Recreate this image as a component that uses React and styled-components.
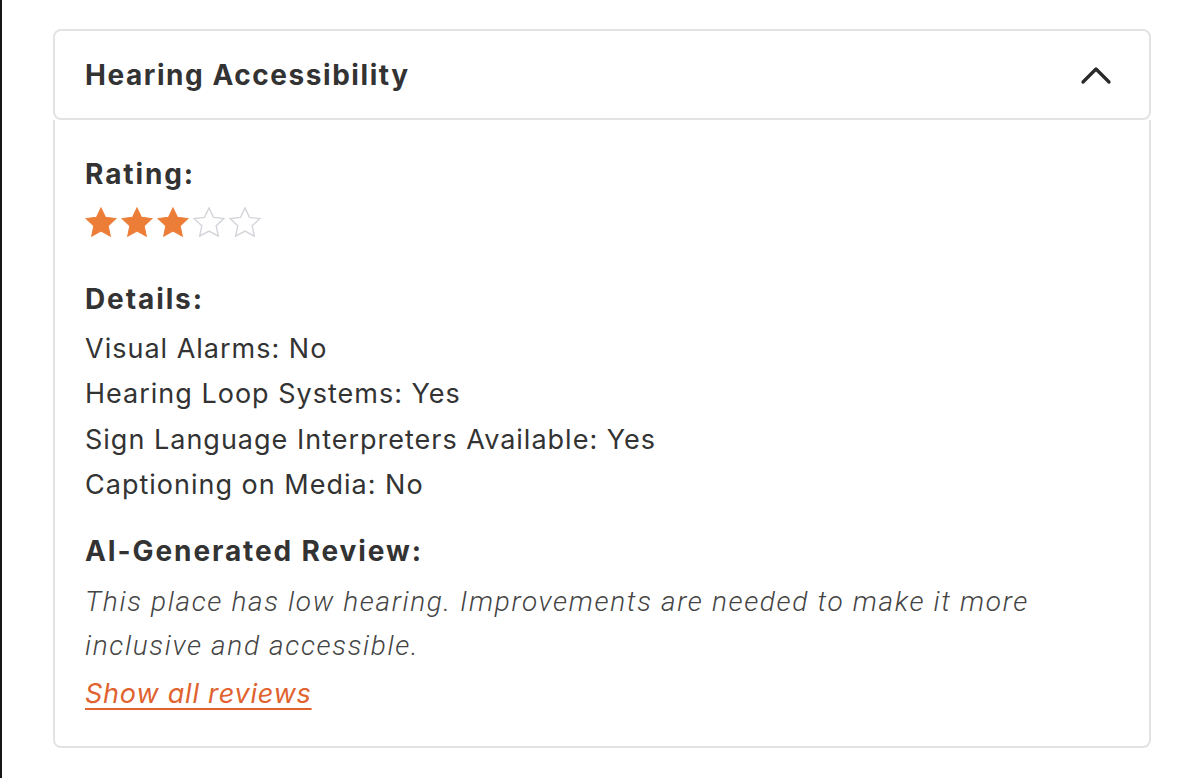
import styled, { createGlobalStyle } from 'styled-components';

const GlobalStyle = createGlobalStyle`
  html, body {
    margin: 0;
    padding: 0;
    background: #ffffff;
  }
  body {
    font-family: Inter, "Noto Sans", "Liberation Sans", sans-serif;
    color: #333333;
  }
`;

const Page = styled.div`
  min-height: 778px;
  box-sizing: border-box;
  border-left: 2px solid #161616;
  padding: 29px 31px 0 51px;
`;

const Card = styled.section`
  display: flex;
  flex-direction: column;
`;

const Header = styled.button`
  display: flex;
  align-items: center;
  justify-content: space-between;
  height: 91px;
  box-sizing: border-box;
  padding: 0 37px 0 30px;
  background: #fff;
  border: 2px solid #e3e3e3;
  border-radius: 8px;
  cursor: pointer;
  font: inherit;
  color: inherit;
  text-align: left;
`;

const Title = styled.h2`
  margin: 0;
  font-size: 28px;
  font-weight: 700;
  color: #333;
  letter-spacing: 1.55px;
`;

const Panel = styled.div`
  border: 2px solid #e3e3e3;
  border-top: none;
  border-radius: 0 0 8px 8px;
  padding: 32px 30px 30px;
`;

const Label = styled.h3`
  margin: ${p => p.$top || 0}px 0 ${p => p.$bottom || 0}px;
  font-size: 28px;
  line-height: 45px;
  font-weight: 700;
  letter-spacing: 1.9px;
  color: #333;
`;

const Stars = styled.div`
  display: flex;
  gap: 4px;
  margin-top: 10px;
  height: 30px;
  align-items: center;
`;

const List = styled.ul`
  list-style: none;
  margin: 0;
  padding: 0;
`;

const Item = styled.li`
  font-size: 27px;
  line-height: 45.3px;
  letter-spacing: 1px;
  color: #333;
`;

const Review = styled.p`
  margin: 6px 0 0;
  font-family: Roboto, Inter, sans-serif;
  font-size: 28px;
  line-height: 44px;
  font-style: italic;
  font-weight: 300;
  letter-spacing: 1.65px;
  color: #444;
  max-width: 980px;
`;

const Link = styled.a`
  display: inline-block;
  margin-top: 4px;
  font-size: 27px;
  line-height: 44px;
  font-style: italic;
  letter-spacing: 0.8px;
  color: #e0632f;
  text-decoration: underline;
  text-decoration-thickness: 2px;
  text-underline-offset: 5px;
  cursor: pointer;
`;

const Star = ({ filled }) => (
  <svg width="32" height="30" viewBox="0 -0.3 31 29.6">
    <polygon
      points="15.5,0.6 19.9,9.9 30.2,11.1 22.6,18.3 24.7,28.5 15.5,23.5 6.3,28.5 8.4,18.3 0.8,11.1 11.1,9.9"
      fill={filled ? '#ec7d37' : 'none'}
      stroke={filled ? '#ec7d37' : '#d3d5da'}
      strokeWidth={filled ? 1 : 1.4}
      strokeLinejoin="miter"
    />
  </svg>
);

const Chevron = () => (
  <svg width="32" height="20" viewBox="0 0 32 20">
    <polyline
      points="3,17 16,4 29,17"
      fill="none"
      stroke="#2b2b2b"
      strokeWidth="3.3"
      strokeLinecap="round"
      strokeLinejoin="round"
    />
  </svg>
);

const details = [
  'Visual Alarms: No',
  'Hearing Loop Systems: Yes',
  'Sign Language Interpreters Available: Yes',
  'Captioning on Media: No',
];

export default function App() {
  const rating = 3;
  return (
    <Page>
      <GlobalStyle />
      <Card>
        <Header>
          <Title>Hearing Accessibility</Title>
          <Chevron />
        </Header>
        <Panel>
          <Label>Rating:</Label>
          <Stars>
            {[1, 2, 3, 4, 5].map(n => (
              <Star key={n} filled={n <= rating} />
            ))}
          </Stars>
          <Label $top={40} $bottom={4}>Details:</Label>
          <List>
            {details.map(d => (
              <Item key={d}>{d}</Item>
            ))}
          </List>
          <Label $top={22}>AI-Generated Review:</Label>
          <Review>
            This place has low hearing. Improvements are needed to make it more
            inclusive and accessible.
          </Review>
          <Link>Show all reviews</Link>
        </Panel>
      </Card>
    </Page>
  );
}
